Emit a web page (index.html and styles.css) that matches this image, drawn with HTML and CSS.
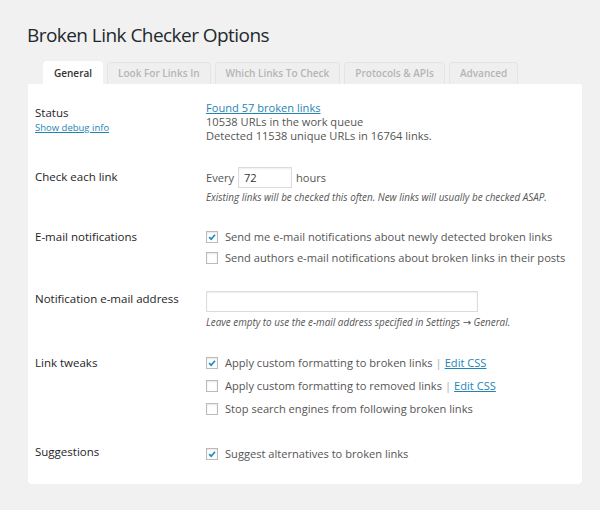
FILE: index.html
```html
<!DOCTYPE html>
<html>
<head>
<meta charset="utf-8">
<link rel="stylesheet" href="styles.css">
</head>
<body>
<div class="wrap">
  <h1 class="title">Broken Link Checker Options</h1>
  <nav class="tabs">
    <span class="tab active">General</span>
    <span class="tab">Look For Links In</span>
    <span class="tab">Which Links To Check</span>
    <span class="tab">Protocols &amp; APIs</span>
    <span class="tab">Advanced</span>
  </nav>
  <div class="panel">
    <div class="row row-status">
      <div class="label">Status<br><a class="small-link" href="#">Show debug info</a></div>
      <div class="field">
        <a class="link" href="#">Found 57 broken links</a><br>
        10538 URLs in the work queue<br>
        Detected 11538 unique URLs in 16764 links.
      </div>
    </div>
    <div class="row row-check">
      <div class="label">Check each link</div>
      <div class="field">
        <div class="inline">Every <span class="input short">72</span> hours</div>
        <div class="help">Existing links will be checked this often. New links will usually be checked ASAP.</div>
      </div>
    </div>
    <div class="row row-email">
      <div class="label">E-mail notifications</div>
      <div class="field">
        <div class="option"><span class="cb checked"><svg viewBox="0 0 12 12"><path d="M2.6 6.2 L5 8.6 L9.6 3.2"/></svg></span>Send me e-mail notifications about newly detected broken links</div>
        <div class="option"><span class="cb"></span>Send authors e-mail notifications about broken links in their posts</div>
      </div>
    </div>
    <div class="row row-address">
      <div class="label">Notification e-mail address</div>
      <div class="field">
        <span class="input long"></span>
        <div class="help help-addr">Leave empty to use the e-mail address specified in Settings → General.</div>
      </div>
    </div>
    <div class="row row-tweaks">
      <div class="label">Link tweaks</div>
      <div class="field">
        <div class="option tall"><span class="cb checked"><svg viewBox="0 0 12 12"><path d="M2.6 6.2 L5 8.6 L9.6 3.2"/></svg></span>Apply custom formatting to broken links <span class="sep">|</span> <a class="link" href="#">Edit CSS</a></div>
        <div class="option tall"><span class="cb"></span>Apply custom formatting to removed links <span class="sep">|</span> <a class="link" href="#">Edit CSS</a></div>
        <div class="option tall"><span class="cb"></span>Stop search engines from following broken links</div>
      </div>
    </div>
    <div class="row row-sugg">
      <div class="label">Suggestions</div>
      <div class="field">
        <div class="option tall"><span class="cb checked"><svg viewBox="0 0 12 12"><path d="M2.6 6.2 L5 8.6 L9.6 3.2"/></svg></span>Suggest alternatives to broken links</div>
      </div>
    </div>
  </div>
</div>
</body>
</html>
```

FILE: styles.css
```css
html, body {
  margin: 0;
  padding: 0;
  background: #f1f1f1;
}
body {
  font-family: "Open Sans", "DejaVu Sans", sans-serif;
  color: #555;
  font-size: 11.1px;
}
.wrap {
  padding: 21px 18px 0 28px;
}
.title {
  margin: 0 0 0 -1px;
  font-size: 19px;
  letter-spacing: -0.55px;
  font-weight: 400;
  line-height: 28px;
  color: #23282d;
}
.tabs {
  display: flex;
  gap: 4px;
  margin: 12px 0 0 15px;
  height: 23px;
  align-items: flex-end;
}
.tab {
  box-sizing: border-box;
  height: 22px;
  padding: 0 10px;
  font-size: 10px;
  font-weight: 600;
  line-height: 21px;
  color: #b5b5b5;
  background: #efefef;
  border: 1px solid #e4e4e4;
  border-bottom: none;
  border-radius: 4px 4px 0 0;
}
.tab.active {
  height: 23px;
  line-height: 23px;
  color: #333;
  background: #fff;
  border-color: #fff;
}
.panel {
  background: #fff;
  border-radius: 0 3px 3px 3px;
  box-shadow: 0 1px 1px rgba(0,0,0,0.05);
  padding: 17px 7px 19px 7px;
  height: 400px;
  box-sizing: border-box;
}
.row {
  display: flex;
  align-items: flex-start;
}
.label {
  width: 171px;
  flex: none;
  color: #1e1e1e;
  font-size: 11.5px;
  font-weight: 400;
  line-height: 14px;
}
.field {
  line-height: 14px;
}
.small-link {
  font-size: 9.5px;
  font-weight: 400;
  color: #1f85b4;
}
.link {
  color: #1f85b4;
}
.row-status .label { padding-top: 5px; }
.row-check { margin-top: 24px; }
.row-check .label { padding-top: 3px; }
.inline {
  display: flex;
  align-items: center;
  gap: 4px;
  height: 21px;
}
.input {
  display: inline-block;
  box-sizing: border-box;
  height: 21px;
  border: 1px solid #dcdcdc;
  box-shadow: inset 0 1px 2px rgba(0,0,0,0.07);
  background: #fff;
  line-height: 19px;
  padding: 0 5px;
  color: #333;
}
.input.short { width: 54px; }
.input.long { width: 272px; display: block; }
.help {
  font-size: 9.9px;
  font-style: italic;
  line-height: 13px;
  margin-top: 3px;
  color: #555;
}
.help-addr { margin-top: 4px; }
.row-email { margin-top: 22px; }
.row-email .label { padding-top: 4px; }
.option {
  display: flex;
  align-items: center;
  height: 21px;
}
.option.tall { height: 23px; }
.cb {
  box-sizing: border-box;
  width: 12px;
  height: 12px;
  margin-right: 7px;
  border: 1px solid #bbb;
  background: #fff;
  box-shadow: inset 0 1px 2px rgba(0,0,0,0.1);
  flex: none;
  display: flex;
}
.cb svg {
  width: 10px;
  height: 10px;
  fill: none;
  stroke: #1e8cbe;
  stroke-width: 2;
}
.sep {
  color: #aaa;
  margin: 0 3px;
}
.row-address { margin-top: 23px; }
.row-address .label { padding-top: 1px; }
.row-tweaks { margin-top: 22px; }
.row-tweaks .label { padding-top: 5px; }
.row-sugg { margin-top: 22px; }
.row-sugg .label { padding-top: 3px; }
```
